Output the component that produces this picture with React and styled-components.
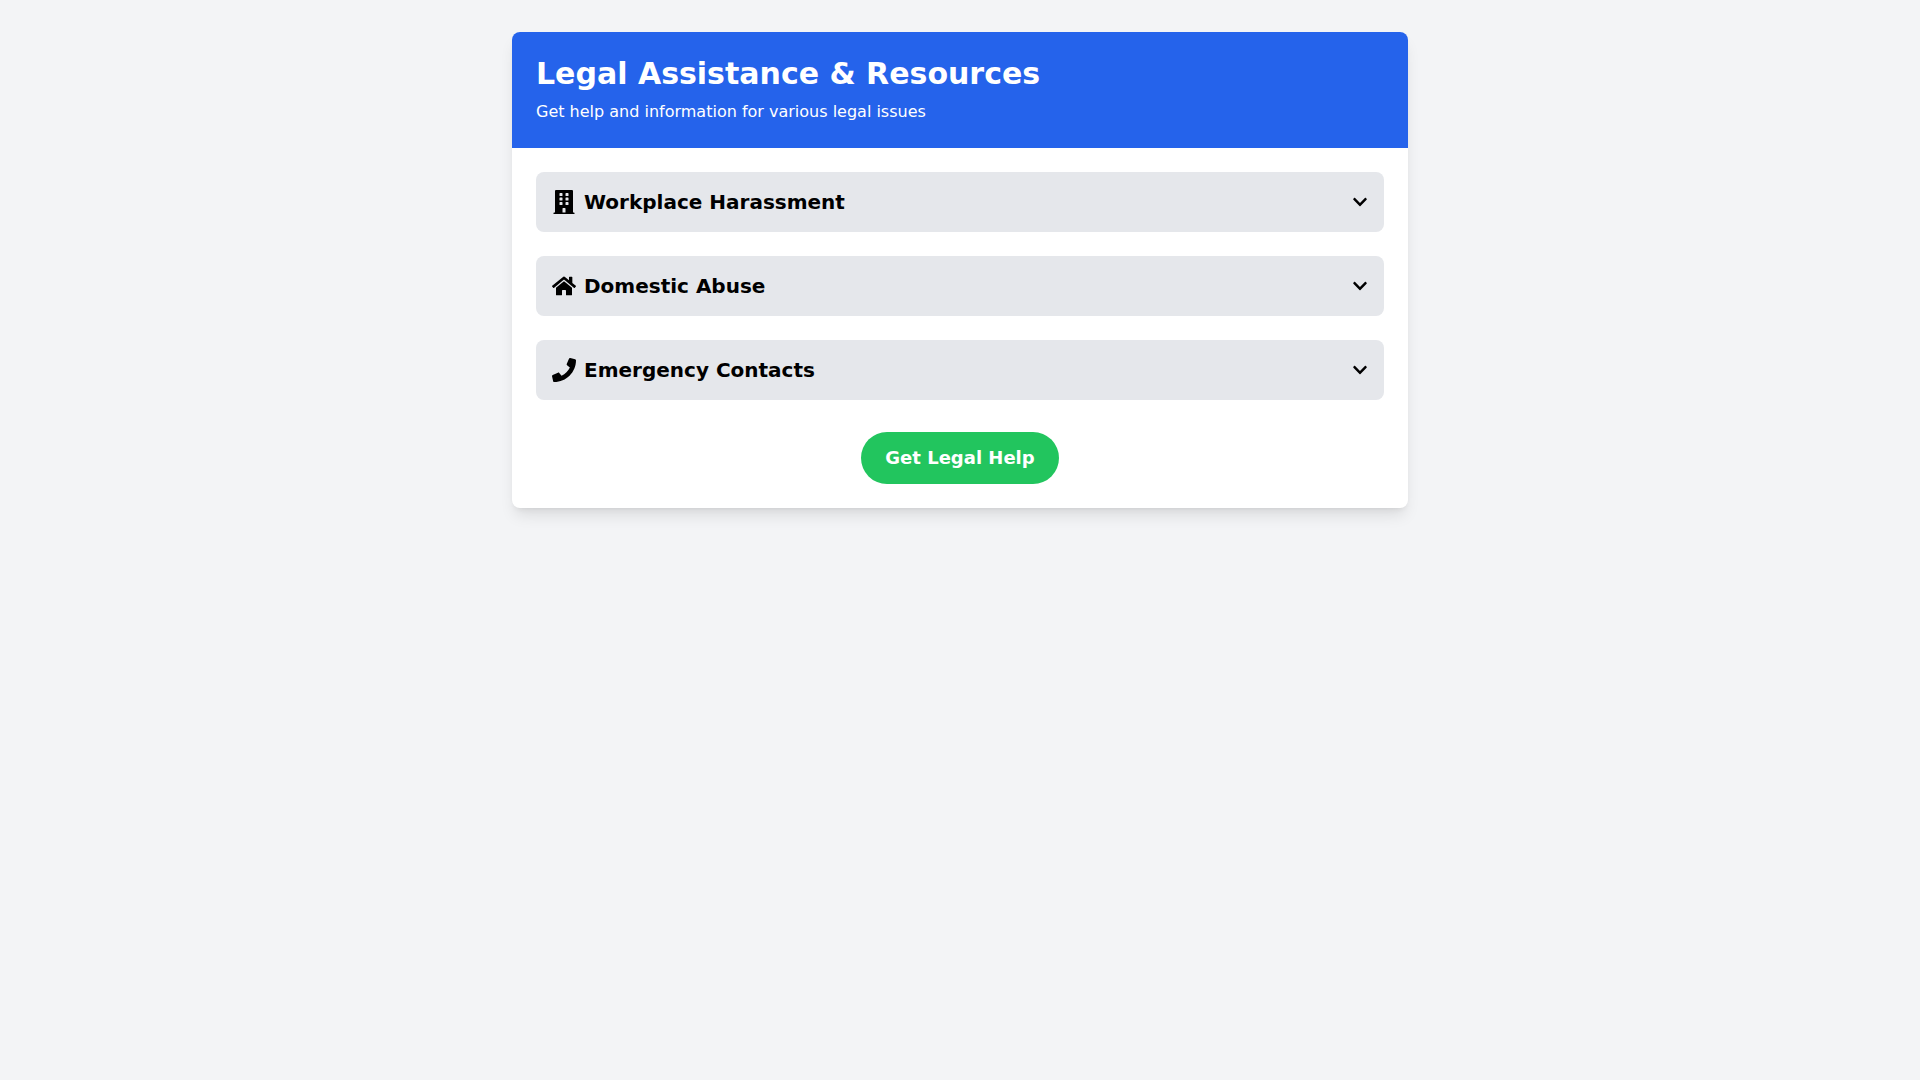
import React, { useState } from 'react';
import styled, { createGlobalStyle } from 'styled-components';
import { FaBuilding, FaHome, FaPhone, FaChevronDown, FaChevronUp } from 'react-icons/fa';

const sections = [
  { id: 'workplace', title: 'Workplace Harassment', icon: FaBuilding },
  { id: 'domestic', title: 'Domestic Abuse', icon: FaHome },
  { id: 'emergency', title: 'Emergency Contacts', icon: FaPhone },
];

const App = () => {
  const [open, setOpen] = useState(null);

  const toggle = (id) => {
    setOpen(open === id ? null : id);
  };

  return (
    <Page>
      <GlobalStyle />
      <Card>
        <Header>
          <h1>Legal Assistance &amp; Resources</h1>
          <p>Get help and information for various legal issues</p>
        </Header>
        <Content>
          {sections.map(({ id, title, icon: Icon }) => (
            <SectionButton
              key={id}
              type="button"
              aria-expanded={open === id}
              onClick={() => toggle(id)}
            >
              <SectionTitle>
                <Icon size={24} />
                <span>{title}</span>
              </SectionTitle>
              {open === id ? <FaChevronUp size={16} /> : <FaChevronDown size={16} />}
            </SectionButton>
          ))}
          <Actions>
            <HelpButton type="button">Get Legal Help</HelpButton>
          </Actions>
        </Content>
      </Card>
    </Page>
  );
};

export default App;

const GlobalStyle = createGlobalStyle`
  *, *::before, *::after {
    box-sizing: border-box;
  }
  body {
    margin: 0;
    background: #f3f4f6;
    font-family: "DejaVu Sans", sans-serif;
    font-size: 16px;
    line-height: 24px;
  }
  h1, p {
    margin: 0;
  }
  button {
    border: none;
    font-family: inherit;
    cursor: pointer;
  }
`;

const Page = styled.main`
  min-height: 100vh;
  padding: 32px;
  background: #f3f4f6;
`;

const Card = styled.div`
  max-width: 896px;
  margin: 0 auto;
  overflow: hidden;
  border-radius: 8px;
  background: #fff;
  box-shadow: 0 10px 15px -3px rgba(0, 0, 0, 0.1), 0 4px 6px -4px rgba(0, 0, 0, 0.1);
`;

const Header = styled.header`
  padding: 24px;
  background: #2563eb;
  color: #fff;

  h1 {
    font-size: 30px;
    font-weight: 700;
    line-height: 36px;
  }
  p {
    margin-top: 8px;
  }
`;

const Content = styled.div`
  display: flex;
  flex-direction: column;
  gap: 24px;
  padding: 24px;
`;

const SectionButton = styled.button`
  display: flex;
  align-items: center;
  justify-content: space-between;
  width: 100%;
  padding: 16px;
  border-radius: 8px;
  background: #e5e7eb;
  color: #000;
  font-size: 20px;
  font-weight: 600;
  line-height: 28px;

  &:hover {
    background: #d1d5db;
  }
`;

const SectionTitle = styled.span`
  display: flex;
  align-items: center;
  gap: 8px;
`;

const Actions = styled.div`
  display: flex;
  justify-content: center;
  padding-top: 8px;
`;

const HelpButton = styled.button`
  padding: 12px 24px;
  border-radius: 9999px;
  background: #22c55e;
  color: #fff;
  font-size: 18px;
  font-weight: 700;
  line-height: 28px;

  &:hover {
    background: #16a34a;
  }
`;
